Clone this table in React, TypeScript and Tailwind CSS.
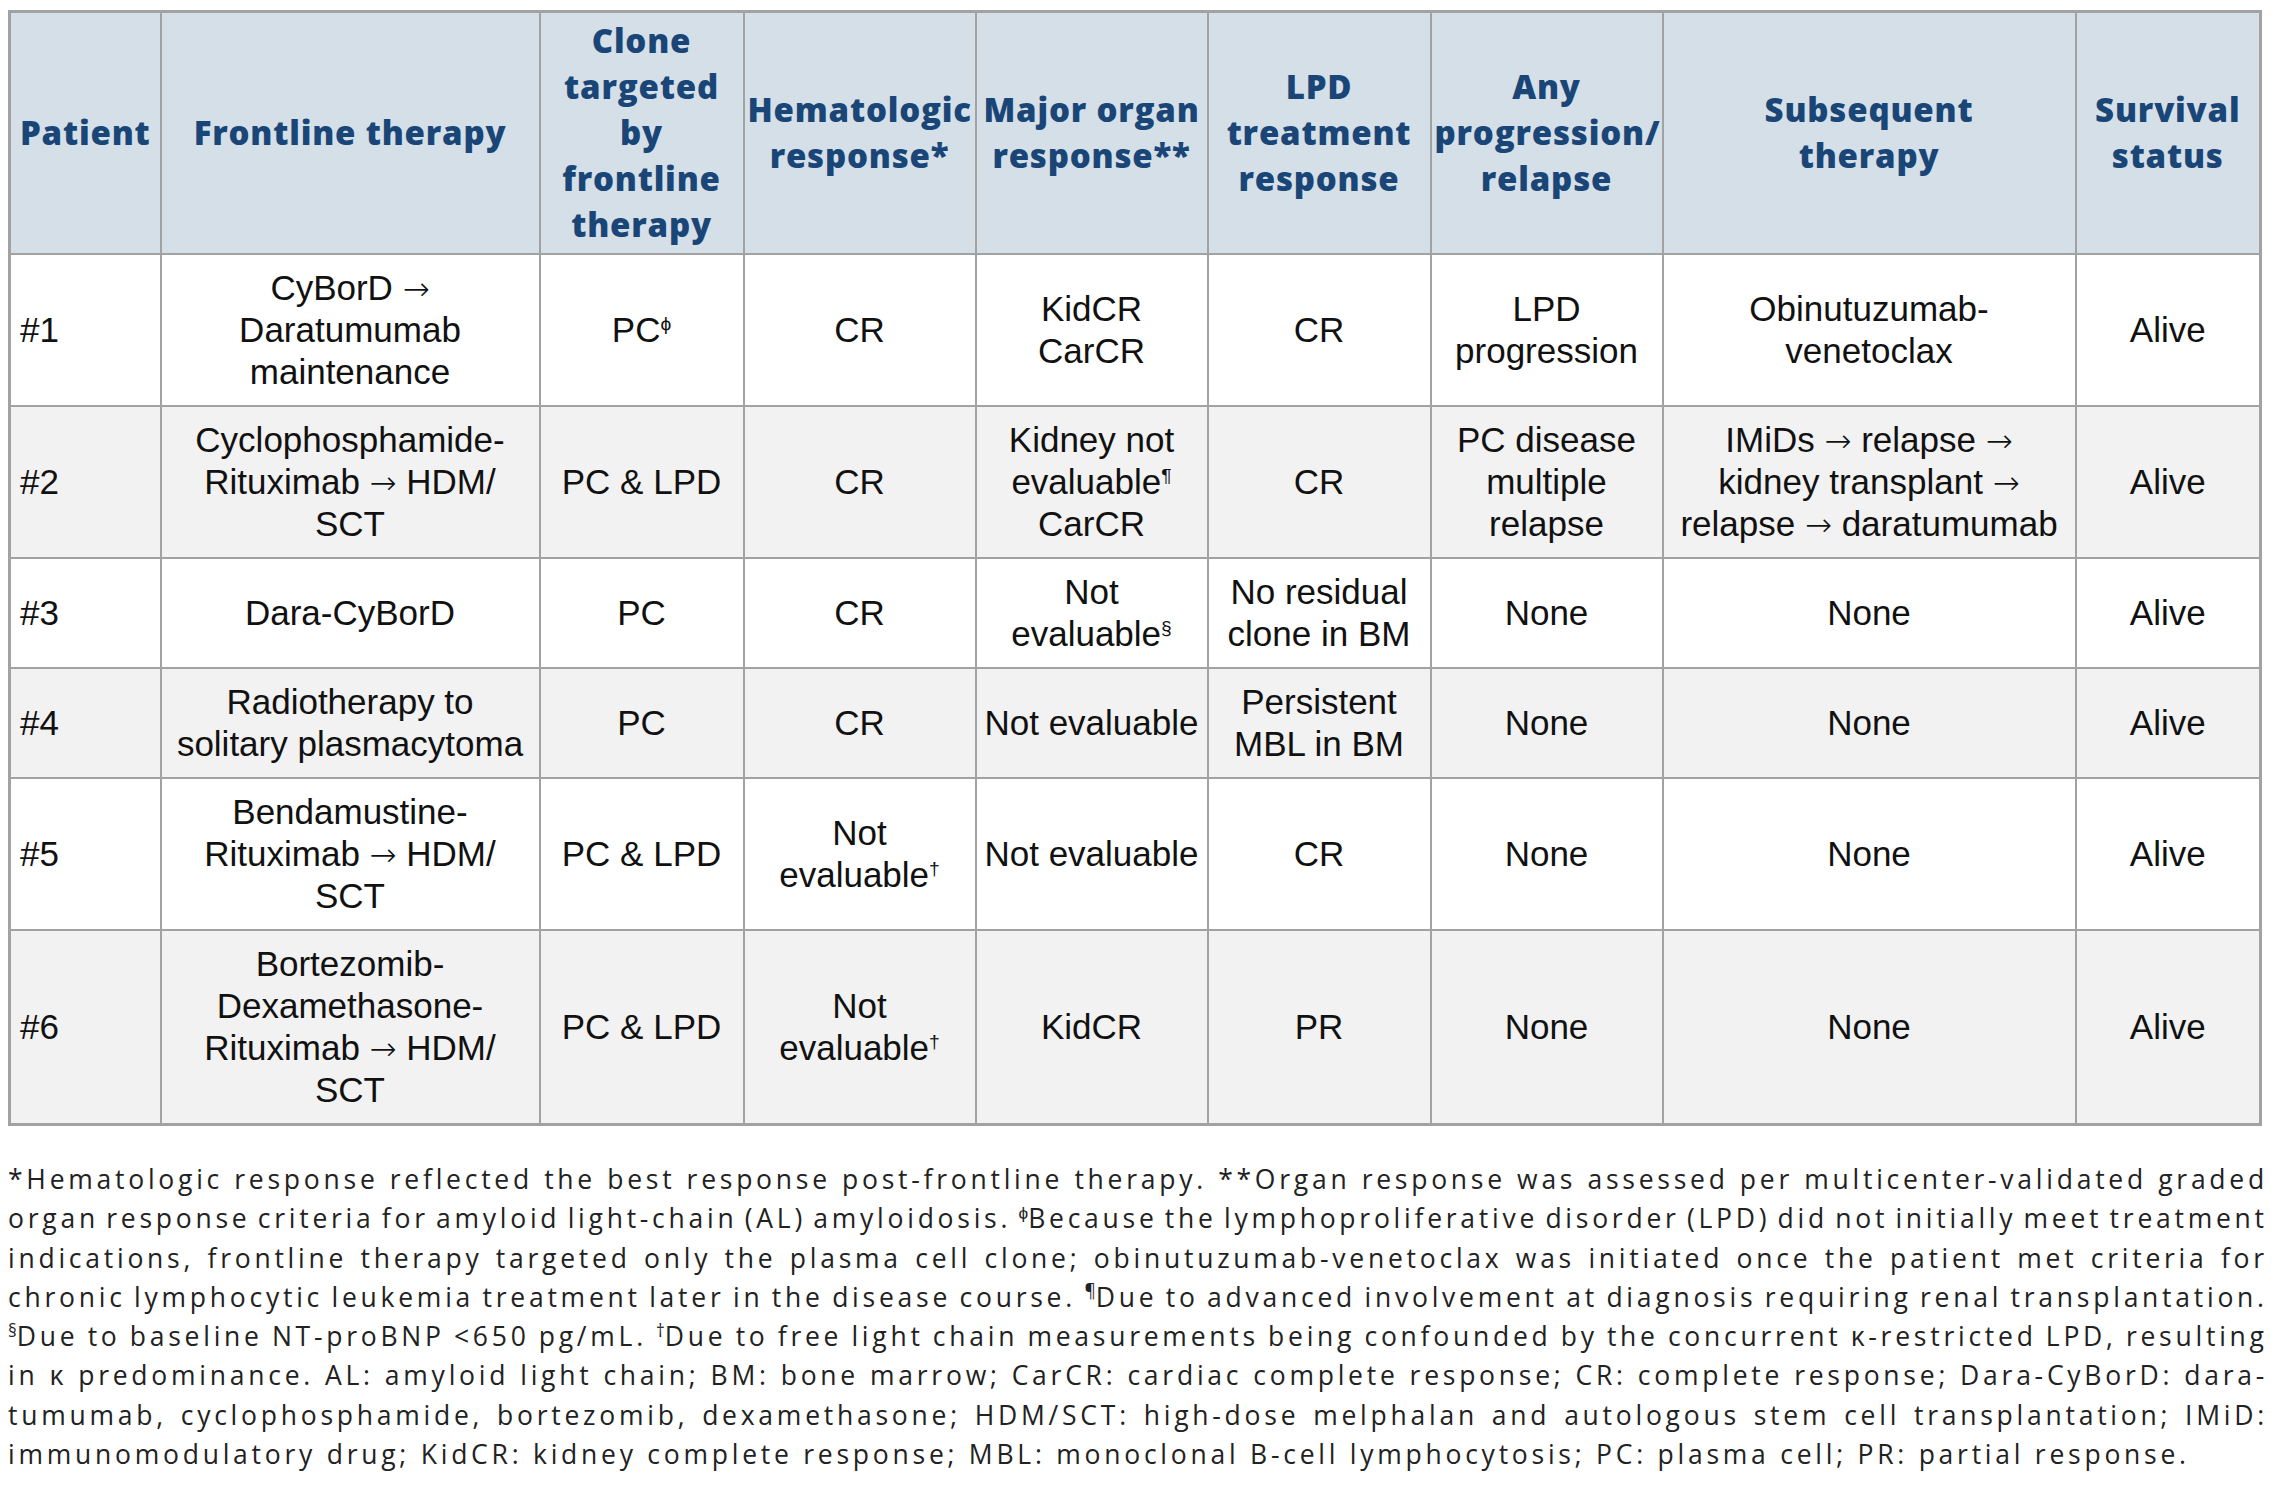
import React from 'react';

// --- Small helpers ---
const Sup = ({ children }: { children: React.ReactNode }) => (
  <sup className="relative -top-[0.6em] align-baseline text-[0.55em]">{children}</sup>
);

const Arrow = () => (
  <span className="font-['DejaVu_Sans',sans-serif] font-extralight text-[0.92em] leading-none">→</span>
);

type Lines = React.ReactNode[];

const colWidths = ['w-[151px]', 'w-[379px]', 'w-[204px]', 'w-[232px]', 'w-[232px]', 'w-[223px]', 'w-[232px]', 'w-[413px]', 'w-[185px]'];

const headers: Lines[] = [
  ['Patient'],
  ['Frontline therapy'],
  ['Clone', 'targeted', 'by', 'frontline', 'therapy'],
  ['Hematologic', 'response*'],
  ['Major organ', 'response**'],
  ['LPD', 'treatment', 'response'],
  ['Any', 'progression/', 'relapse'],
  ['Subsequent', 'therapy'],
  ['Survival', 'status'],
];

const rows: Lines[][] = [
  [
    ['#1'],
    [<>CyBorD <Arrow /></>, 'Daratumumab', 'maintenance'],
    [<>PC<Sup>ϕ</Sup></>],
    ['CR'],
    ['KidCR', 'CarCR'],
    ['CR'],
    ['LPD', 'progression'],
    ['Obinutuzumab-', 'venetoclax'],
    ['Alive'],
  ],
  [
    ['#2'],
    ['Cyclophosphamide-', <>Rituximab <Arrow /> HDM/</>, 'SCT'],
    ['PC & LPD'],
    ['CR'],
    ['Kidney not', <>evaluable<Sup>¶</Sup></>, 'CarCR'],
    ['CR'],
    ['PC disease', 'multiple', 'relapse'],
    [<>IMiDs <Arrow /> relapse <Arrow /></>, <>kidney transplant <Arrow /></>, <>relapse <Arrow /> daratumumab</>],
    ['Alive'],
  ],
  [
    ['#3'],
    ['Dara-CyBorD'],
    ['PC'],
    ['CR'],
    ['Not', <>evaluable<Sup>§</Sup></>],
    ['No residual', 'clone in BM'],
    ['None'],
    ['None'],
    ['Alive'],
  ],
  [
    ['#4'],
    ['Radiotherapy to', 'solitary plasmacytoma'],
    ['PC'],
    ['CR'],
    ['Not evaluable'],
    ['Persistent', 'MBL in BM'],
    ['None'],
    ['None'],
    ['Alive'],
  ],
  [
    ['#5'],
    ['Bendamustine-', <>Rituximab <Arrow /> HDM/</>, 'SCT'],
    ['PC & LPD'],
    ['Not', <>evaluable<Sup>†</Sup></>],
    ['Not evaluable'],
    ['CR'],
    ['None'],
    ['None'],
    ['Alive'],
  ],
  [
    ['#6'],
    ['Bortezomib-', 'Dexamethasone-', <>Rituximab <Arrow /> HDM/</>, 'SCT'],
    ['PC & LPD'],
    ['Not', <>evaluable<Sup>†</Sup></>],
    ['KidCR'],
    ['PR'],
    ['None'],
    ['None'],
    ['Alive'],
  ],
];

const FSup = ({ children }: { children: React.ReactNode }) => (
  <sup className="relative -top-[0.55em] align-baseline text-[0.65em] tracking-normal">{children}</sup>
);

// footnote, one entry per printed line (the last one is not justified)
const footLines = [
  '*Hematologic response reflected the best response post-frontline therapy. **Organ response was assessed per multicenter-validated graded',
  'organ response criteria for amyloid light-chain (AL) amyloidosis. ϕBecause the lymphoproliferative disorder (LPD) did not initially meet treatment',
  'indications, frontline therapy targeted only the plasma cell clone; obinutuzumab-venetoclax was initiated once the patient met criteria for',
  'chronic lymphocytic leukemia treatment later in the disease course. ¶Due to advanced involvement at diagnosis requiring renal transplantation.',
  '§Due to baseline NT-proBNP <650 pg/mL. †Due to free light chain measurements being confounded by the concurrent κ-restricted LPD, resulting',
  'in κ predominance. AL: amyloid light chain; BM: bone marrow; CarCR: cardiac complete response; CR: complete response; Dara-CyBorD: dara-',
  'tumumab, cyclophosphamide, bortezomib, dexamethasone; HDM/SCT: high-dose melphalan and autologous stem cell transplantation; IMiD:',
  'immunomodulatory drug; KidCR: kidney complete response; MBL: monoclonal B-cell lymphocytosis; PC: plasma cell; PR: partial response.',
];

const renderWord = (w: string) =>
  'ϕ¶§†'.includes(w[0]) ? (
    <>
      <FSup>{w[0]}</FSup>
      {w.slice(1)}
    </>
  ) : (
    w
  );

const renderLines = (lines: Lines) =>
  lines.map((l, i) => (
    <React.Fragment key={i}>
      {i > 0 && <br />}
      {l}
    </React.Fragment>
  ));

export default function App() {
  return (
    <div className="bg-white min-h-screen pl-[8px] pt-[10px] pr-[6px]">
      <table className="table-fixed border-collapse w-[2251px] border-[3px] border-[#a2a2a2]">
        <colgroup>
          {colWidths.map((w, i) => (
            <col key={i} className={w} />
          ))}
        </colgroup>
        <thead>
          <tr className="bg-[#d5dfe8]">
            {headers.map((h, i) => (
              <th
                key={i}
                className="border-2 border-[#a2a2a2] px-[3px] py-[5px] align-middle text-center whitespace-nowrap font-['Open_Sans',sans-serif] font-extrabold text-[33px] leading-[46px] tracking-[0.8px] text-[#1a4677]"
              >
                {renderLines(h)}
              </th>
            ))}
          </tr>
        </thead>
        <tbody>
          {rows.map((row, r) => (
            <tr key={r} className={r % 2 === 1 ? 'bg-[#f2f2f2]' : 'bg-white'}>
              {row.map((cell, c) => (
                <td
                  key={c}
                  className={`border-2 border-[#a2a2a2] py-[12px] align-middle whitespace-nowrap font-['Liberation_Sans',Arial,sans-serif] text-[35px] leading-[42px] text-[#111111] ${
                    c === 0 ? 'text-left pl-[9px] pr-[4px]' : 'text-center px-[4px]'
                  }`}
                >
                  {renderLines(cell)}
                </td>
              ))}
            </tr>
          ))}
        </tbody>
      </table>

      <div className="mt-[34px] w-[2260px] font-['Open_Sans',sans-serif] text-[26.5px] leading-[39.3px] tracking-[3.75px] text-[#222222]">
        {footLines.map((line, i) =>
          i < footLines.length - 1 ? (
            <div key={i} className="flex justify-between whitespace-nowrap">
              {line.split(' ').map((w, j) => (
                <span key={j}>{renderWord(w)}</span>
              ))}
            </div>
          ) : (
            <div key={i} className="whitespace-nowrap">
              {line}
            </div>
          )
        )}
      </div>
    </div>
  );
}
